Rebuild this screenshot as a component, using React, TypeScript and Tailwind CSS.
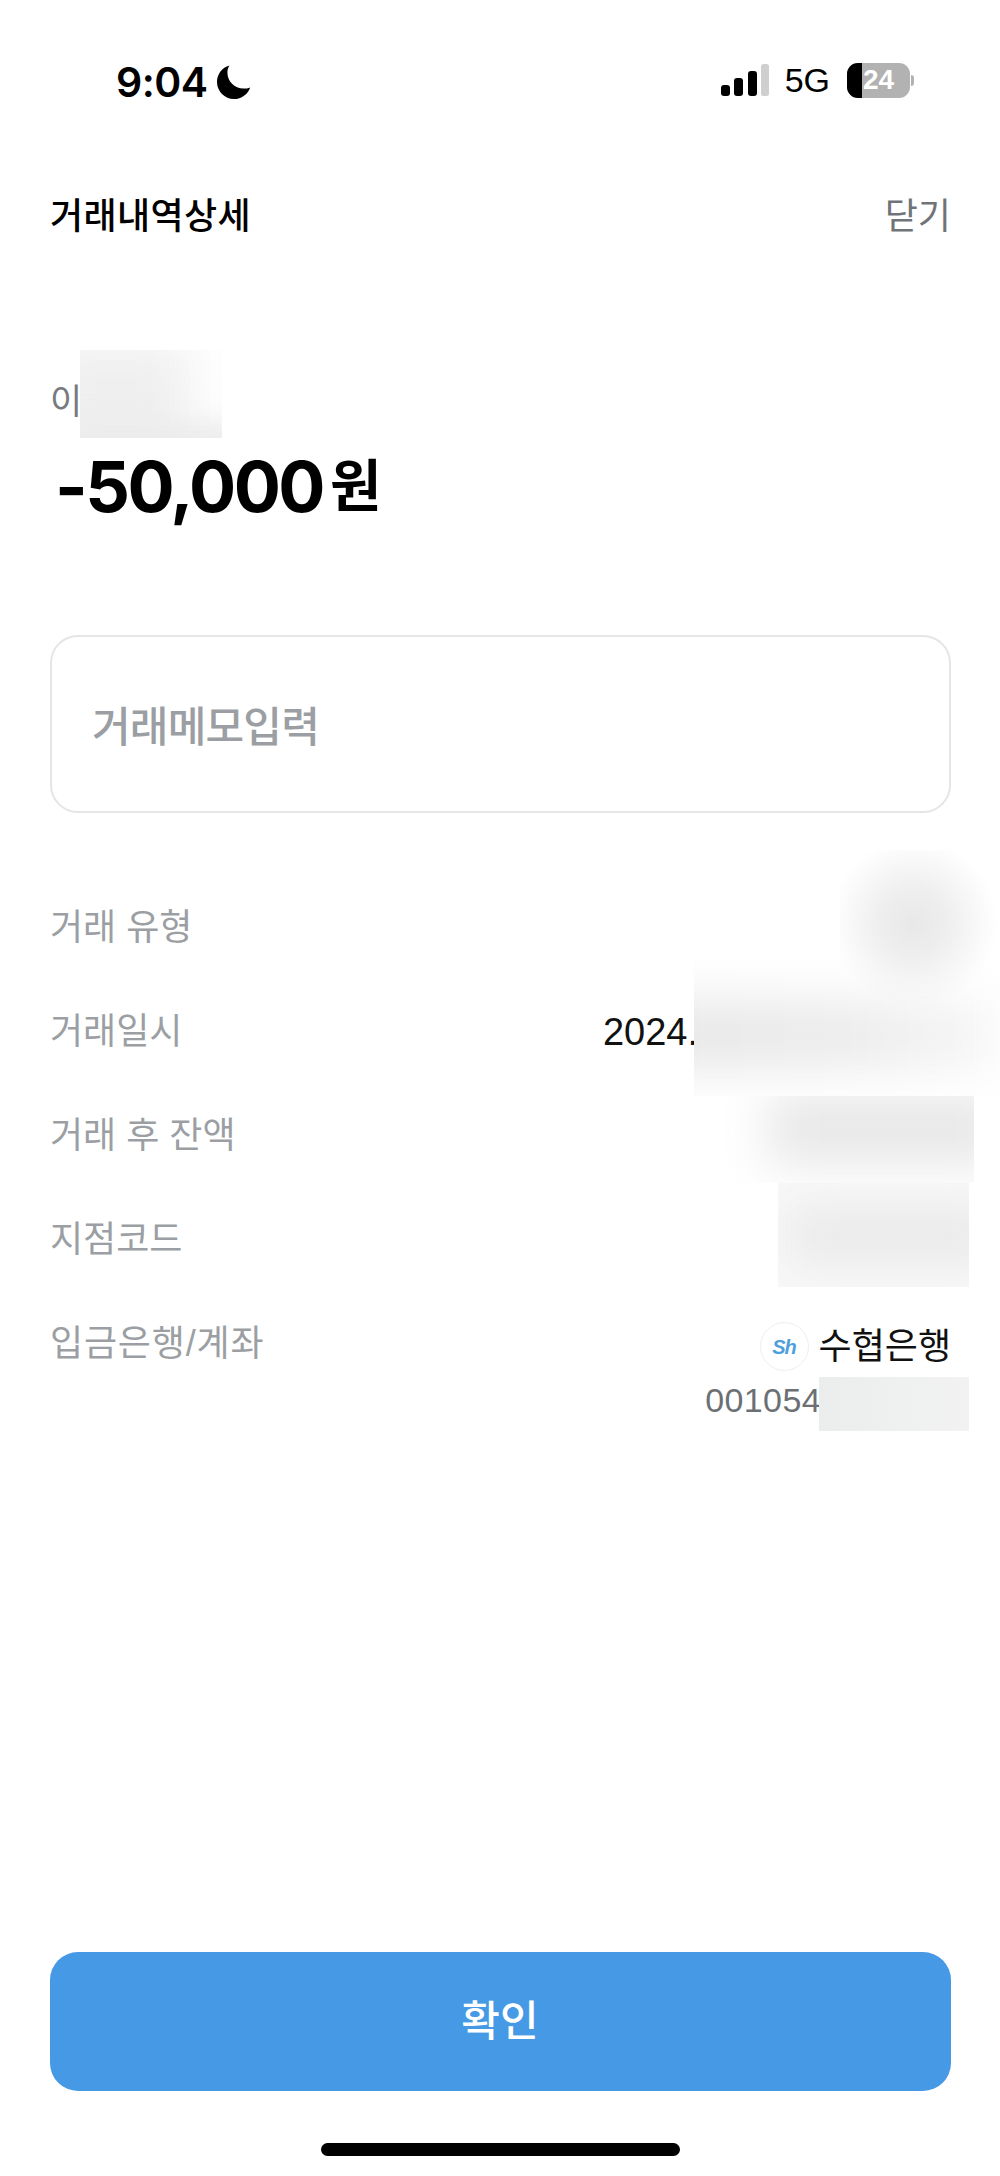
const fontKr = "font-['Liberation_Sans','Noto_Sans_CJK_KR',sans-serif]";

const DetailRow = ({ label, children }: { label: string; children?: React.ReactNode }) => (
  <div className="flex h-[104px] items-center justify-between">
    <span className="text-[36px] leading-none text-[#9b9fa3]">{label}</span>
    {children}
  </div>
);

const StatusBar = () => (
  <div className="flex h-[164px] items-start justify-between pl-[116px] pr-[86px] pt-[62px]">
    <div className="flex items-center gap-[9px]">
      <span className="font-['Inter',sans-serif] text-[41px] font-semibold leading-[40px] tracking-[-0.5px] text-black">9:04</span>
      <svg width="34" height="34" viewBox="0 0 34 34" fill="#000">
        <path d="M12.5 0.6 C5 2.6 0 9.4 0 17 C0 26.4 7.6 34 17 34 C24.4 34 30.8 29.2 33.2 22.4 C31.2 23.2 29 23.6 26.6 23.6 C17.4 23.6 10.4 16.4 10.4 7.6 C10.4 5 11.2 2.6 12.5 0.6 Z" />
      </svg>
    </div>
    <div className="flex items-center">
      <svg width="48" height="33" viewBox="0 0 48 33" className="mr-[16px]">
        <rect x="0" y="21" width="9" height="11" rx="3" fill="#000" />
        <rect x="13" y="14" width="9" height="18" rx="3" fill="#000" />
        <rect x="27" y="7" width="9" height="25" rx="3" fill="#000" />
        <rect x="40" y="0" width="8" height="32" rx="2.5" fill="#cfcfcf" />
      </svg>
      <span className="mr-[17px] font-['Liberation_Sans',sans-serif] text-[34px] leading-[36px] text-black">5G</span>
      <div className="flex items-center">
        <div className="relative flex h-[35px] w-[63px] items-center justify-center overflow-hidden rounded-[11px] bg-[#b2b2b2]">
          <div className="absolute inset-y-0 left-0 w-[15px] bg-black" />
          <span className="relative font-['Liberation_Sans',sans-serif] text-[28px] font-bold leading-none text-white">24</span>
        </div>
        <div className="ml-[1px] h-[11px] w-[3px] rounded-r-full bg-[#b2b2b2]" />
      </div>
    </div>
  </div>
);

export default function App() {
  return (
    <div className={`relative flex h-[2176px] w-[1000px] flex-col overflow-hidden bg-white ${fontKr}`}>
      <StatusBar />

      <div className="flex h-[100px] items-center justify-between pl-[50px] pr-[49px] pt-[6px]">
        <h1 className="text-[36px] font-medium leading-none tracking-[0.4px] text-black">거래내역상세</h1>
        <button className="text-[36px] leading-none text-[#6f7478]">닫기</button>
      </div>

      <div className="mt-[104px] flex h-[60px] items-center px-[50px] pt-[6px]">
        <span className="text-[35px] leading-none text-[#777b7f]">이</span>
      </div>
      <div className="mt-[19px] flex h-[80px] items-center gap-[7px] pl-[55px]">
        <span className="font-['Inter',sans-serif] text-[70px] font-bold leading-none tracking-[-2.5px] text-black">-50,000</span>
        <span className="text-[56px] font-bold leading-none text-black">원</span>
      </div>

      <div className="ml-[50px] mr-[49px] mt-[108px] flex h-[178px] items-center rounded-[28px] border-2 border-[#e3e5e6] pl-[40px] pt-[8px]">
        <span className="text-[42px] font-medium leading-none tracking-[-0.8px] text-[#9b9fa3]">거래메모입력</span>
      </div>

      <div className="mt-[63px] flex flex-col pl-[50px] pr-[49px]">
        <DetailRow label="거래 유형" />
        <DetailRow label="거래일시">
          <span className="mr-[253px] text-[38px] leading-none text-[#111]">2024.</span>
        </DetailRow>
        <DetailRow label="거래 후 잔액" />
        <DetailRow label="지점코드" />
        <div className="flex items-start justify-between pt-[34px]">
          <span className="text-[36px] leading-none tracking-[0.8px] text-[#9b9fa3]">입금은행/계좌</span>
          <div className="-mt-[4px] flex flex-col items-end">
            <div className="flex items-center gap-[10px]">
              <div className="flex h-[49px] w-[49px] items-center justify-center rounded-full border border-[#eeeeee]">
                <span className="text-[20px] font-bold italic leading-none tracking-[-1px] text-[#4f9fdc]">Sh</span>
              </div>
              <span className="text-[36px] leading-none text-[#111]">수협은행</span>
            </div>
            <span className="mr-[130px] mt-[9px] text-[34px] leading-[40px] tracking-[0.4px] text-[#6b7074]">001054</span>
          </div>
        </div>
      </div>

      <div className="mt-auto flex flex-col items-center pb-[20px]">
        <button className="flex h-[139px] w-[901px] items-center justify-center rounded-[28px] bg-[#4699e5] text-[42px] font-medium leading-none text-white">
          확인
        </button>
        <div className="mt-[52px] h-[13px] w-[359px] rounded-full bg-black" />
      </div>

      {/* blurred-out private values sit over the content */}
      <div className="absolute left-[80px] top-[350px] h-[88px] w-[142px] overflow-hidden bg-white">
        <div className="absolute left-[-40px] top-[-10px] h-[120px] w-[150px] bg-[#efefef] blur-[24px]" />
        <div className="absolute bottom-[-20px] left-[-10px] h-[36px] w-[170px] bg-[#ebebeb] blur-[12px]" />
      </div>
      <div className="absolute left-[694px] top-[955px] h-[141px] w-[306px] overflow-hidden bg-white">
        <div className="absolute left-[-60px] top-[45px] h-[70px] w-[360px] bg-[linear-gradient(90deg,#e6e6e6,#ebebeb_60%,#f6f6f6)] blur-[24px]" />
      </div>
      <div className="absolute left-[840px] top-[850px] h-[170px] w-[160px] bg-[radial-gradient(circle_at_46%_43%,#e8e8e8,#eeeeee_25%,#ffffff00_65%)]" />
      <div className="absolute left-[722px] top-[1096px] h-[87px] w-[252px] overflow-hidden bg-white">
        <div className="absolute left-[45px] top-[-5px] h-[75px] w-[240px] bg-[#e8e8e8] blur-[24px]" />
      </div>
      <div className="absolute left-[778px] top-[1183px] h-[104px] w-[191px] overflow-hidden bg-[#f8f8f8]">
        <div className="absolute left-[10px] top-[25px] h-[55px] w-[210px] bg-[#e9e9e9] blur-[22px]" />
      </div>
      <div className="absolute left-[819px] top-[1377px] h-[54px] w-[150px] bg-[linear-gradient(90deg,#ebeded,#f2f2f2)]" />
    </div>
  );
}
